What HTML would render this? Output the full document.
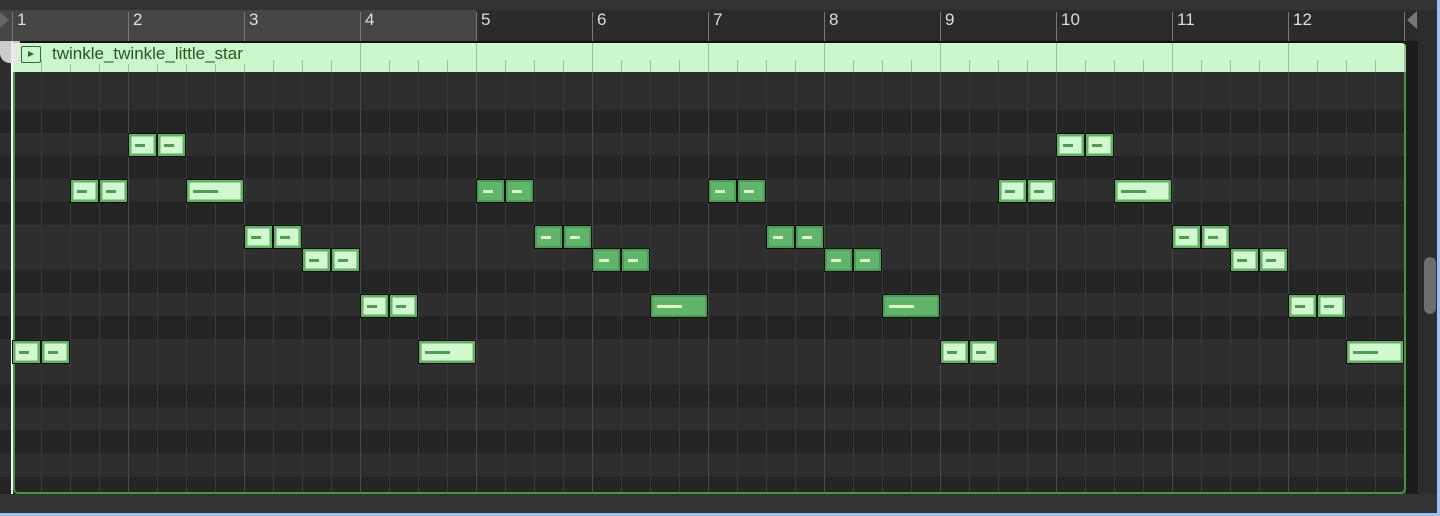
<!DOCTYPE html>
<html><head><meta charset="utf-8"><style>
body{margin:0;width:1440px;height:516px;overflow:hidden;background:#262626;position:relative;font-family:"Liberation Sans",sans-serif}
div{position:absolute;box-sizing:border-box}
.num{top:10px;font-size:17px;color:#ddd}
.n{height:24px;width:29px;border:1px solid #0a0a0a;background:#d2f8d2;box-shadow:inset 0 0 0 2.5px #5fb55f}
.d{background:#5fb569;box-shadow:inset 0 0 0 2px #4a9e52}
.h{width:58px}
.n i{position:absolute;left:6px;top:10px;width:10px;height:3px;background:#4d9e4d}
.d i{background:#e0f5c8}
.h i{width:25px}
</style></head><body>
<div style="left:0;top:0;width:1440px;height:10px;background:#333"></div>
<div style="left:0;top:10px;width:1406px;height:31px;background:#2b2b2b"></div>
<div style="left:0;top:10px;width:476px;height:31px;background:#454545"></div>
<div style="left:12px;top:12px;width:1393px;height:29px;background:repeating-linear-gradient(90deg,#777 0 1px,transparent 1px 116px)"></div>
<div style="left:1406px;top:10px;width:34px;height:31px;background:#2b2b2b"></div>
<div style="left:0;top:41px;width:1406px;height:1px;background:#111"></div>
<div style="left:0;top:42px;width:1406px;height:452px;background:#2e2e2e"></div>
<div style="left:0;top:87px;width:1406px;height:407px;background:repeating-linear-gradient(180deg,#2e2e2e 0 22.9px,#252525 22.9px 45.8px,#2e2e2e 45.8px 68.7px,#252525 68.7px 91.6px,#2e2e2e 91.6px 114.5px,#252525 114.5px 137.4px,#2e2e2e 137.4px 183.2px,#252525 183.2px 206.1px,#2e2e2e 206.1px 229px,#252525 229px 251.9px,#2e2e2e 251.9px 274.8px)"></div>
<div style="left:12px;top:72px;width:1394px;height:422px;background:repeating-linear-gradient(90deg,#3a3a3a 0 1px,transparent 1px 29px)"></div>
<div style="left:12px;top:72px;width:1394px;height:422px;background:repeating-linear-gradient(90deg,#4a4a4a 0 1px,transparent 1px 116px)"></div>
<div style="left:1406px;top:41px;width:12px;height:453px;background:#1c1c1c"></div>
<div style="left:1418px;top:10px;width:19px;height:484px;background:#2c2c2c"></div>
<div style="left:1424px;top:257px;width:12px;height:57px;border-radius:6px;background:#6e6e6e"></div>
<div style="left:0;top:494px;width:1437px;height:19px;background:#333"></div>
<div style="left:0;top:513px;width:1440px;height:3px;background:#9cc2f4"></div>
<div style="left:1437px;top:0;width:3px;height:516px;background:#9cc2f4"></div>
<div style="left:0;top:12px;width:0;height:0;border-top:8px solid transparent;border-bottom:8px solid transparent;border-left:9px solid #666"></div>
<div style="left:1407px;top:11px;width:0;height:0;border-top:9px solid transparent;border-bottom:9px solid transparent;border-right:10px solid #777"></div>
<div class="num" style="left:17px">1</div>
<div class="num" style="left:133px">2</div>
<div class="num" style="left:249px">3</div>
<div class="num" style="left:365px">4</div>
<div class="num" style="left:481px">5</div>
<div class="num" style="left:597px">6</div>
<div class="num" style="left:713px">7</div>
<div class="num" style="left:829px">8</div>
<div class="num" style="left:945px">9</div>
<div class="num" style="left:1061px">10</div>
<div class="num" style="left:1177px">11</div>
<div class="num" style="left:1293px">12</div>
<div style="left:13px;top:42px;width:1393px;height:30px;background:#ccf6cc;border-top-right-radius:5px;border-top:1px solid #111;overflow:hidden">
<div style="left:0;top:17px;width:1393px;height:13px;background:repeating-linear-gradient(90deg,#9cbf9c 0 1px,transparent 1px 29px);background-position:-1px 0"></div>
<div style="left:0;top:0;width:1393px;height:30px;background:repeating-linear-gradient(90deg,#9cbf9c 0 1px,transparent 1px 116px);background-position:-1px 0"></div>
</div>
<div style="left:21px;top:46px;width:20px;height:17px;border:1.5px solid #2f6a2f;border-radius:2px;background:#ccf6cc"></div>
<div style="left:28px;top:51px;width:0;height:0;border-top:3.5px solid transparent;border-bottom:3.5px solid transparent;border-left:6px solid #2f6a2f"></div>
<div style="left:50px;top:44px;font-size:17px;color:#1f5a1f;background:#ccf6cc;padding:0 2px">twinkle_twinkle_little_star</div>
<div style="left:13px;top:72px;width:1393px;height:422px;border:2px solid #3f9a3f;border-top:none;border-radius:0 0 5px 5px"></div>
<div style="left:11px;top:41px;width:2px;height:453px;background:#fff"></div>
<div style="left:0;top:41px;width:20px;height:22px;background:#e8e8e8;border-radius:0 0 10px 10px;opacity:.85"></div>

<div style="left:-1px;top:0;width:1440px;height:516px">
<div class="n" style="left:13px;top:340px"><i></i></div>
<div class="n" style="left:42px;top:340px"><i></i></div>
<div class="n" style="left:71px;top:179px"><i></i></div>
<div class="n" style="left:100px;top:179px"><i></i></div>
<div class="n" style="left:129px;top:133px"><i></i></div>
<div class="n" style="left:158px;top:133px"><i></i></div>
<div class="n h" style="left:187px;top:179px"><i></i></div>
<div class="n" style="left:245px;top:225px"><i></i></div>
<div class="n" style="left:274px;top:225px"><i></i></div>
<div class="n" style="left:303px;top:248px"><i></i></div>
<div class="n" style="left:332px;top:248px"><i></i></div>
<div class="n" style="left:361px;top:294px"><i></i></div>
<div class="n" style="left:390px;top:294px"><i></i></div>
<div class="n h" style="left:419px;top:340px"><i></i></div>

<div class="n d" style="left:477px;top:179px"><i></i></div>
<div class="n d" style="left:506px;top:179px"><i></i></div>
<div class="n d" style="left:535px;top:225px"><i></i></div>
<div class="n d" style="left:564px;top:225px"><i></i></div>
<div class="n d" style="left:593px;top:248px"><i></i></div>
<div class="n d" style="left:622px;top:248px"><i></i></div>
<div class="n d h" style="left:651px;top:294px"><i></i></div>
<div class="n d" style="left:709px;top:179px"><i></i></div>
<div class="n d" style="left:738px;top:179px"><i></i></div>
<div class="n d" style="left:767px;top:225px"><i></i></div>
<div class="n d" style="left:796px;top:225px"><i></i></div>
<div class="n d" style="left:825px;top:248px"><i></i></div>
<div class="n d" style="left:854px;top:248px"><i></i></div>
<div class="n d h" style="left:883px;top:294px"><i></i></div>

<div class="n" style="left:941px;top:340px"><i></i></div>
<div class="n" style="left:970px;top:340px"><i></i></div>
<div class="n" style="left:999px;top:179px"><i></i></div>
<div class="n" style="left:1028px;top:179px"><i></i></div>
<div class="n" style="left:1057px;top:133px"><i></i></div>
<div class="n" style="left:1086px;top:133px"><i></i></div>
<div class="n h" style="left:1115px;top:179px"><i></i></div>
<div class="n" style="left:1173px;top:225px"><i></i></div>
<div class="n" style="left:1202px;top:225px"><i></i></div>
<div class="n" style="left:1231px;top:248px"><i></i></div>
<div class="n" style="left:1260px;top:248px"><i></i></div>
<div class="n" style="left:1289px;top:294px"><i></i></div>
<div class="n" style="left:1318px;top:294px"><i></i></div>
<div class="n h" style="left:1347px;top:340px"><i></i></div>
</div>
</body></html>
